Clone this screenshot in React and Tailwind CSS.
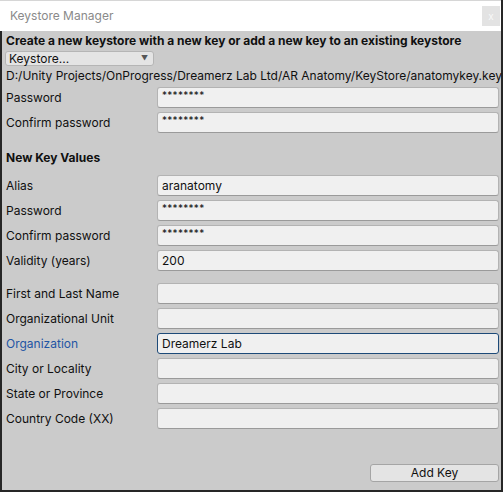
const fieldCls = 'h-[21px] flex-1 rounded-[3px] border border-[#b3b3b3] border-b-[#9a9a9a] bg-[#f0f0f0] px-[4px] flex items-center text-[12px] text-[#101010]'
const activeCls = 'h-[21px] flex-1 rounded-[3px] border border-[#1d4a78] bg-[#f0f0f0] px-[4px] flex items-center text-[12px] text-[#101010]'

function Row({ label, value, active, mb = 'mb-[4px]' }) {
  return (
    <div className={`flex items-center h-[21px] ${mb}`}>
      <div className={`w-[151px] shrink-0 text-[12px] ${active ? 'text-[#1f55a4]' : 'text-[#101010]'}`}>{label}</div>
      <div className={active ? activeCls : fieldCls}>
        {value === 'pw' ? <span className="text-[10px] tracking-[0.3px] -mt-[4px]">********</span> : value}
      </div>
    </div>
  )
}

export default function App() {
  return (
    <div className="w-[503px] h-[492px] bg-[#262626] overflow-hidden" style={{ fontFamily: 'Inter, "Noto Sans", sans-serif' }}>
      <div className="w-[501px] h-[490px] flex flex-col">
        {/* title bar */}
        <div className="h-[31px] shrink-0 bg-white border-t border-[#d6d6d6] flex items-center justify-between pl-[10px] pr-[1px]">
          <span className="text-[12px] text-[#8a8a8a]">Keystore Manager</span>
          <div className="w-[18px] h-[20px] bg-[#e3e3e3] flex items-center justify-center text-[10px] text-[#f8f8f8] leading-none">x</div>
        </div>

        <div className="flex-1 bg-[#cbcbcb] border-l-2 border-[#262626] pl-[4px] pr-[2px] flex flex-col">
          <div className="mt-[3px] h-[14px] leading-[14px] text-[12px] font-bold text-[#101010] whitespace-nowrap">
            Create a new keystore with a new key or add a new key to an existing keystore
          </div>
          <div className="mt-[3px] -ml-[1px] w-[149px] h-[15px] rounded-[3px] border border-[#b5b5b5] bg-[#e4e4e4] flex items-center justify-between pl-[3px] pr-[5px]">
            <span className="text-[12px] text-[#101010] leading-none">Keystore...</span>
            <span className="text-[7px] text-[#555] leading-none">▼</span>
          </div>
          <div className="mt-[2px] h-[16px] leading-[16px] text-[12px] text-[#101010] whitespace-nowrap">
            D:/Unity Projects/OnProgress/Dreamerz Lab Ltd/AR Anatomy/KeyStore/anatomykey.key
          </div>
          <div className="mt-[3px]">
            <Row label="Password" value="pw" />
            <Row label="Confirm password" value="pw" mb="mb-0" />
          </div>
          <div className="mt-[18px] h-[14px] leading-[14px] text-[12px] font-bold text-[#101010]">New Key Values</div>
          <div className="mt-[10px]">
            <Row label="Alias" value="aranatomy" />
            <Row label="Password" value="pw" />
            <Row label="Confirm password" value="pw" />
            <Row label="Validity (years)" value="200" mb="mb-0" />
          </div>
          <div className="mt-[12px]">
            <Row label="First and Last Name" value="" />
            <Row label="Organizational Unit" value="" />
            <Row label="Organization" value="Dreamerz Lab" active />
            <Row label="City or Locality" value="" />
            <Row label="State or Province" value="" />
            <Row label="Country Code (XX)" value="" mb="mb-0" />
          </div>
          <div className="mt-auto mb-[8px] flex justify-end">
            <button className="w-[129px] h-[18px] rounded-[3px] border border-[#a5a5a5] bg-[#e4e4e4] text-[12px] text-[#101010] leading-none">
              Add Key
            </button>
          </div>
        </div>
      </div>
    </div>
  )
}
